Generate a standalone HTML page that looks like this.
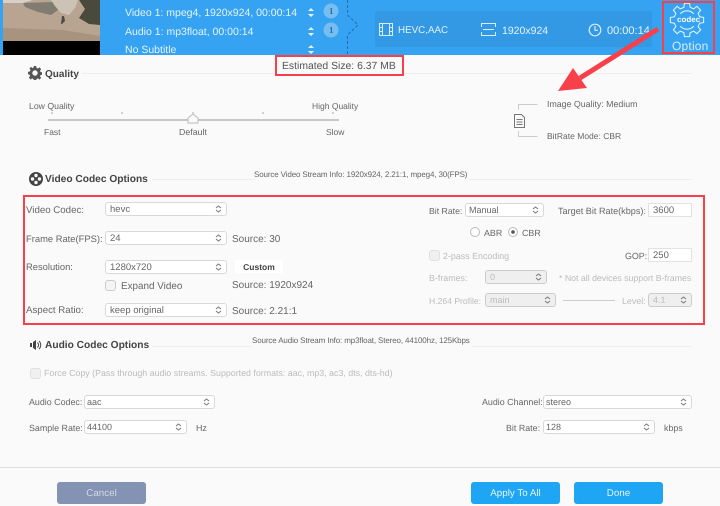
<!DOCTYPE html>
<html><head><meta charset="utf-8">
<style>
html,body{margin:0;padding:0}
body{width:720px;height:506px;overflow:hidden;position:relative;background:#fafafa;font-family:"Liberation Sans",sans-serif;font-size:9.7px;color:#666;text-rendering:geometricPrecision}
.t{position:absolute;white-space:nowrap;line-height:12px;margin-top:1px}
.h{font-weight:bold;font-size:10.2px;color:#444}
.s{font-size:8px;color:#666;letter-spacing:-.13px}
.w{color:#e6f3fd;font-size:10.5px}
.d{color:#bbb}
.r{font-size:8.9px}
.sel{position:absolute;box-sizing:border-box;border:1px solid #d8d8d8;border-radius:3px;background:#fff;line-height:13px;padding-left:4px;color:#666;font-size:9.5px;white-space:nowrap}
.sel svg{position:absolute;right:4px;top:50%;margin-top:-4px}
.dis{background:#efefef;color:#bbb;border-color:#ccc}
.inp{position:absolute;box-sizing:border-box;border:1px solid #e2e2e2;background:#fff;line-height:13px;padding-left:4px;color:#666;font-size:9.5px}
.cb{position:absolute;box-sizing:border-box;width:11px;height:11px;border:1px solid #ccc;border-radius:3px;background:#f4f4f4}
.rd{position:absolute}
.ln{position:absolute;background:#eee;height:1px}
.red{position:absolute;box-sizing:border-box;border:2.5px solid #f8404a}
.btn{position:absolute;top:482px;height:22px;width:89px;border-radius:3px;background:#1ea5f3;color:#e8f6ff;text-align:center;line-height:23px;font-size:9.8px}
</style></head><body>
<div style="position:absolute;left:0;top:0;width:720px;height:55px;background:#35a3f2"></div>
<svg style="position:absolute;left:3px;top:0" width="97" height="55" viewBox="0 0 97 55">
<rect width="97" height="55" fill="#000"/>
<rect width="97" height="41" fill="#b8a491"/>
<polygon points="0,0 30,0 20,3 0,3" fill="#d8d0c6"/>
<polygon points="20,3 50,2 55,10 48,15 35,12 22,7" fill="#807c72"/>
<polygon points="48,0 75,0 72,8 66,15 58,13 52,6" fill="#cdc2b6"/>
<polygon points="76,0 97,0 97,25 86,24 76,18 82,9" fill="#4a4a3c"/>
<polygon points="0,28 60,30 97,36 97,41 0,41" fill="#a8937f"/>
<path d="M61 16l-2 0-1 8 1 0 3-3z" fill="#4d4a4a"/>
</svg>
<div class="t w" style="left:125px;top:6px">Video 1: mpeg4, 1920x924, 00:00:14</div>
<div class="t w" style="left:125px;top:25px">Audio 1: mp3float, 00:00:14</div>
<div class="t w" style="left:125px;top:43px">No Subtitle</div>
<svg style="position:absolute;left:307px;top:0" width="8" height="55" fill="#e6f3fd"><path d="M1 11l3-3 3 3zM1 14l3 3 3-3zM1 30l3-3 3 3zM1 33l3 3 3-3zM1 48l3-3 3 3zM1 51l3 3 3-3z"/></svg>
<svg style="position:absolute;left:323px;top:3px" width="16" height="36"><circle cx="8" cy="8" r="7.500" fill="#76bdf0"/><circle cx="8" cy="27" r="7.500" fill="#76bdf0"/></svg>
<div class="t" style="left:329px;top:4px;font-size:9px;font-weight:bold;color:#2d6f9f;font-family:'Liberation Serif',serif">1</div>
<div class="t" style="left:329px;top:23px;font-size:9px;font-weight:bold;color:#2d6f9f;font-family:'Liberation Serif',serif">1</div>
<svg style="position:absolute;left:340px;top:0" width="20" height="55" fill="none" stroke="#1f6fae"><path d="M7.500 0V15L18 25 7.500 35V55" stroke-dasharray="3 2"/></svg>
<div style="position:absolute;left:375px;top:11px;width:277px;height:36px;background:#3399e4;border-radius:2px"></div>
<svg style="position:absolute;left:379px;top:23px" width="14" height="13" fill="none" stroke="#d8ecfb"><rect x=".5" y=".5" width="13" height="12"/><path d="M3.500 .5v12M10.500 .5v12M.5 4.500h3M.5 8.500h3M10.500 4.500h3M10.500 8.500h3"/></svg>
<div class="t w" style="left:398px;top:24px;font-size:9.800px">HEVC,AAC</div>
<svg style="position:absolute;left:481px;top:23px" width="16" height="13" fill="none" stroke="#d8ecfb"><path d="M.5 4V.5h14V4M.5 9v3.500h14V9M2 6.500h11"/></svg>
<div class="t w" style="left:502px;top:24px">1920x924</div>
<svg style="position:absolute;left:588px;top:23px" width="14" height="14" fill="none" stroke="#d8ecfb" stroke-width="1.200"><circle cx="7" cy="7" r="5.800"/><path d="M7 3v4.300h3"/></svg>
<div class="t w" style="left:607px;top:24px;font-size:11px">00:00:14</div>
<svg style="position:absolute;left:664px;top:3px" width="48" height="36" viewBox="0 0 48 36" fill="none" stroke="#e6f3fd" stroke-width="1.100">
<g transform="translate(23 17) scale(.96)"><polygon points="13.100,-3.300 17.300,-2.700 17.300,2.700 13.100,3.300 11.600,7 14.200,10.300 10.300,14.200 7,11.600 3.300,13.100 2.700,17.300 -2.700,17.300 -3.300,13.100 -7,11.600 -10.300,14.200 -14.200,10.300 -11.600,7 -13.100,3.300 -17.300,2.700 -17.300,-2.700 -13.100,-3.300 -11.600,-7 -14.200,-10.300 -10.300,-14.200 -7,-11.600 -3.300,-13.100 -2.700,-17.300 2.700,-17.300 3.300,-13.100 7,-11.600 10.300,-14.200 14.200,-10.300 11.600,-7"/>
<path d="M-7 -6.500A9.500 9.500 0 0 1 7 -6.500M-7 6.500A9.500 9.500 0 0 0 7 6.500"/></g></svg>
<div class="t" style="left:677px;top:12.500px;font-size:8px;font-weight:bold;color:#f4faff">codec</div>
<div class="t" style="left:672px;top:38.500px;font-size:12px;color:#d8ecfb;letter-spacing:.2px">Option</div>
<div class="red" style="left:662px;top:1px;width:53px;height:53px"></div>

<div class="ln" style="left:82px;top:73px;width:194px"></div>
<div class="ln" style="left:404px;top:73px;width:288px"></div>
<svg style="position:absolute;left:28px;top:66px" width="14" height="14" viewBox="0 0 14 14"><path d="M5.800 0h2.400l.3 1.900 1.400.6L11.500 1.400l1.700 1.700-1.200 1.500.6 1.400 1.900.3v2.400l-1.900.3-.6 1.400 1.200 1.500-1.700 1.700-1.500-1.200-1.500.6-.3 1.900H5.800l-.3-1.900-1.400-.6-1.500 1.200L.9 11.500l1.200-1.500-.6-1.400L0 8.200V5.800l1.900-.3.6-1.400L1.400 2.500 3.100.9l1.500 1.200 1-.6zM7 4.300A2.700 2.700 0 1 0 7 9.700 2.700 2.700 0 1 0 7 4.300z" fill="#555" fill-rule="evenodd"/></svg>
<div class="t h" style="left:45px;top:68px;font-size:10px">Quality</div>
<div class="t" style="left:282px;top:60px;font-size:10.400px;color:#555">Estimated Size: 6.37 MB</div>
<div class="red" style="left:275px;top:55px;width:129px;height:21px"></div>

<div class="t" style="left:29px;top:99px;font-size:8.700px">Low Quality</div>
<div class="t" style="left:312px;top:99px;font-size:8.500px">High Quality</div>
<div style="position:absolute;left:48px;top:119px;width:291px;height:2px;background:#c8c8c8"></div>
<svg style="position:absolute;left:48px;top:110px" width="291" height="16"><path d="M4 2v2M74 2v2M145 2v2M215 2v2M285 2v2" stroke="#aaa"/><path d="M145 4l5 4v5h-10V8z" fill="#fafafa" stroke="#bbb"/></svg>
<div class="t" style="left:44px;top:125px;font-size:8.500px">Fast</div>
<div class="t" style="left:179px;top:125px;font-size:8.800px">Default</div>
<div class="t" style="left:326px;top:125px;font-size:8.500px">Slow</div>
<svg style="position:absolute;left:512px;top:102px" width="30" height="36" fill="none"><path d="M6.500 8V2.500h19M6.500 29v5.500h19" stroke="#ccc"/><path d="M2.500 12.500h7l3 3v10h-10zM4.500 17.500h6M4.500 20h6M4.500 22.500h6" stroke="#777" fill="#fafafa"/></svg>
<div class="t" style="left:547px;top:97px;font-size:8.800px">Image Quality: Medium</div>
<div class="t" style="left:547px;top:129px;font-size:8.500px">BitRate Mode: CBR</div>

<svg style="position:absolute;left:551px;top:26px" width="110" height="72"><path d="M107 3L29 52" stroke="#f8404a" stroke-width="5"/><path d="M7 65L22 42 36 62z" fill="#f8404a"/></svg>

<div class="ln" style="left:152px;top:179px;width:540px"></div>
<svg style="position:absolute;left:29px;top:172px" width="14" height="14"><circle cx="7" cy="7" r="7" fill="#444"/><g fill="#fafafa"><circle cx="7" cy="3.500" r="1.700"/><circle cx="7" cy="10.500" r="1.700"/><circle cx="3.500" cy="7" r="1.700"/><circle cx="10.500" cy="7" r="1.700"/></g></svg>
<div class="t h" style="left:45px;top:173px">Video Codec Options</div>
<div class="t s" style="left:254px;top:168px;background:#fafafa;padding-right:2px">Source Video Stream Info: 1920x924, 2.21:1, mpeg4, 30(FPS)</div>

<div class="red" style="left:23px;top:195px;width:682px;height:130px"></div>
<div class="t" style="left:26px;top:204px">Video Codec:</div>
<div class="sel" style="left:105px;top:202px;width:122px;height:14px">hevc<svg width="7" height="8" fill="none" stroke="#777"><path d="M1 3l2.500-2 2.500 2M1 5l2.500 2 2.500-2"/></svg></div>
<div class="t" style="left:26px;top:232px;font-size:9.400px">Frame Rate(FPS):</div>
<div class="sel" style="left:105px;top:231px;width:122px;height:14px">24<svg width="7" height="8" fill="none" stroke="#777"><path d="M1 3l2.500-2 2.500 2M1 5l2.500 2 2.500-2"/></svg></div>
<div class="t" style="left:232px;top:233px;font-size:10px">Source: 30</div>
<div class="t" style="left:26px;top:260px;font-size:9.400px">Resolution:</div>
<div class="sel" style="left:105px;top:260px;width:122px;height:14px">1280x720<svg width="7" height="8" fill="none" stroke="#777"><path d="M1 3l2.500-2 2.500 2M1 5l2.500 2 2.500-2"/></svg></div>
<div style="position:absolute;left:235px;top:260px;width:48px;height:13px;background:#fff;text-align:center;line-height:14px;font-size:8.500px;font-weight:bold;color:#444">Custom</div>
<div class="cb" style="left:105px;top:280px"></div>
<div class="t" style="left:121px;top:280px;font-size:9.900px">Expand Video</div>
<div class="t" style="left:232px;top:279px;font-size:10px">Source: 1920x924</div>
<div class="t" style="left:26px;top:304px">Aspect Ratio:</div>
<div class="sel" style="left:105px;top:303px;width:122px;height:14px">keep original<svg width="7" height="8" fill="none" stroke="#777"><path d="M1 3l2.500-2 2.500 2M1 5l2.500 2 2.500-2"/></svg></div>
<div class="t" style="left:232px;top:305px;font-size:10px">Source: 2.21:1</div>

<div class="t r" style="left:429px;top:204px;font-size:8.700px">Bit Rate:</div>
<div class="sel" style="left:465px;top:203px;width:79px;height:14px;padding-left:3px;font-size:9px">Manual<svg width="7" height="8" fill="none" stroke="#777"><path d="M1 3l2.500-2 2.500 2M1 5l2.500 2 2.500-2"/></svg></div>
<div class="t" style="left:558px;top:204px;font-size:9.100px">Target Bit Rate(kbps):</div>
<div class="inp" style="left:648px;top:203px;width:44px;height:14px;font-size:9.500px">3600</div>
<svg class="rd" style="left:469px;top:226px" width="54" height="12" fill="#fff" stroke="#bbb"><circle cx="6" cy="6" r="4.500"/><circle cx="44" cy="6" r="4.500"/><circle cx="44" cy="6" r="1.800" fill="#555" stroke="none"/></svg>
<div class="t r" style="left:484px;top:226px">ABR</div>
<div class="t r" style="left:522px;top:226px">CBR</div>
<div class="cb" style="left:429px;top:250px;background:#f0f0f0;border-color:#e0e0e0"></div>
<div class="t d r" style="left:443px;top:249px">2-pass Encoding</div>
<div class="t r" style="left:625px;top:249px">GOP:</div>
<div class="inp" style="left:648px;top:248px;width:44px;height:14px">250</div>
<div class="t d r" style="left:429px;top:271px">B-frames:</div>
<div class="sel dis" style="left:485px;top:270px;width:62px;height:14px;font-size:9px">0<svg width="7" height="8" fill="none" stroke="#777"><path d="M1 3l2.500-2 2.500 2M1 5l2.500 2 2.500-2"/></svg></div>
<div class="t d" style="left:559px;top:271px;font-size:8.750px">* Not all devices support B-frames</div>
<div class="t d r" style="left:429px;top:294px;font-size:8.600px">H.264 Profile:</div>
<div class="sel dis" style="left:485px;top:293px;width:71px;height:14px;font-size:9px">main<svg width="7" height="8" fill="none" stroke="#777"><path d="M1 3l2.500-2 2.500 2M1 5l2.500 2 2.500-2"/></svg></div>
<div class="ln" style="left:563px;top:300px;width:52px;background:#ccc"></div>
<div class="t d r" style="left:622px;top:294px">Level:</div>
<div class="sel dis" style="left:648px;top:293px;width:44px;height:14px;font-size:9px">4.1<svg width="7" height="8" fill="none" stroke="#777"><path d="M1 3l2.500-2 2.500 2M1 5l2.500 2 2.500-2"/></svg></div>

<div class="ln" style="left:152px;top:346px;width:540px"></div>
<svg style="position:absolute;left:29px;top:339px" width="13" height="12" fill="none" stroke="#444"><path d="M1 4h2v4H1zM4 3l3-2v10l-3-2z" fill="#444" stroke="none"/><path d="M8.500 3.500a3.500 3.500 0 0 1 0 5M10 2a5.500 5.500 0 0 1 0 8"/></svg>
<div class="t h" style="left:45px;top:339px">Audio Codec Options</div>
<div class="t s" style="left:252px;top:334px;background:#fafafa;padding-right:2px">Source Audio Stream Info: mp3float, Stereo, 44100hz, 125Kbps</div>
<div class="cb" style="left:30px;top:368px;background:#f0f0f0;border-color:#e0e0e0"></div>
<div class="t d" style="left:44px;top:366px;font-size:8.860px">Force Copy (Pass through audio streams. Supported formats: aac, mp3, ac3, dts, dts-hd)</div>
<div class="t r" style="left:29px;top:395px">Audio Codec:</div>
<div class="sel" style="left:84px;top:395px;width:131px;height:14px;padding-left:2px;font-size:9px">aac<svg width="7" height="8" fill="none" stroke="#777"><path d="M1 3l2.500-2 2.500 2M1 5l2.500 2 2.500-2"/></svg></div>
<div class="t r" style="left:29px;top:421px">Sample Rate:</div>
<div class="sel" style="left:84px;top:420px;width:103px;height:14px;padding-left:2px;font-size:9px">44100<svg width="7" height="8" fill="none" stroke="#777"><path d="M1 3l2.500-2 2.500 2M1 5l2.500 2 2.500-2"/></svg></div>
<div class="t r" style="left:196px;top:421px">Hz</div>
<div class="t r" style="left:482px;top:395px">Audio Channel:</div>
<div class="sel" style="left:543px;top:395px;width:149px;height:14px;padding-left:2px;font-size:9px">stereo<svg width="7" height="8" fill="none" stroke="#777"><path d="M1 3l2.500-2 2.500 2M1 5l2.500 2 2.500-2"/></svg></div>
<div class="t r" style="left:506px;top:421px">Bit Rate:</div>
<div class="sel" style="left:543px;top:420px;width:112px;height:14px;padding-left:2px;font-size:9px">128<svg width="7" height="8" fill="none" stroke="#777"><path d="M1 3l2.500-2 2.500 2M1 5l2.500 2 2.500-2"/></svg></div>
<div class="t r" style="left:664px;top:421px">kbps</div>

<div class="ln" style="left:0;top:467px;width:720px;background:#ddd"></div>
<div class="btn" style="left:57px;background:#8493b3;color:#d4d9e4">Cancel</div>
<div class="btn" style="left:471px">Apply To All</div>
<div class="btn" style="left:574px">Done</div>
</body></html>
